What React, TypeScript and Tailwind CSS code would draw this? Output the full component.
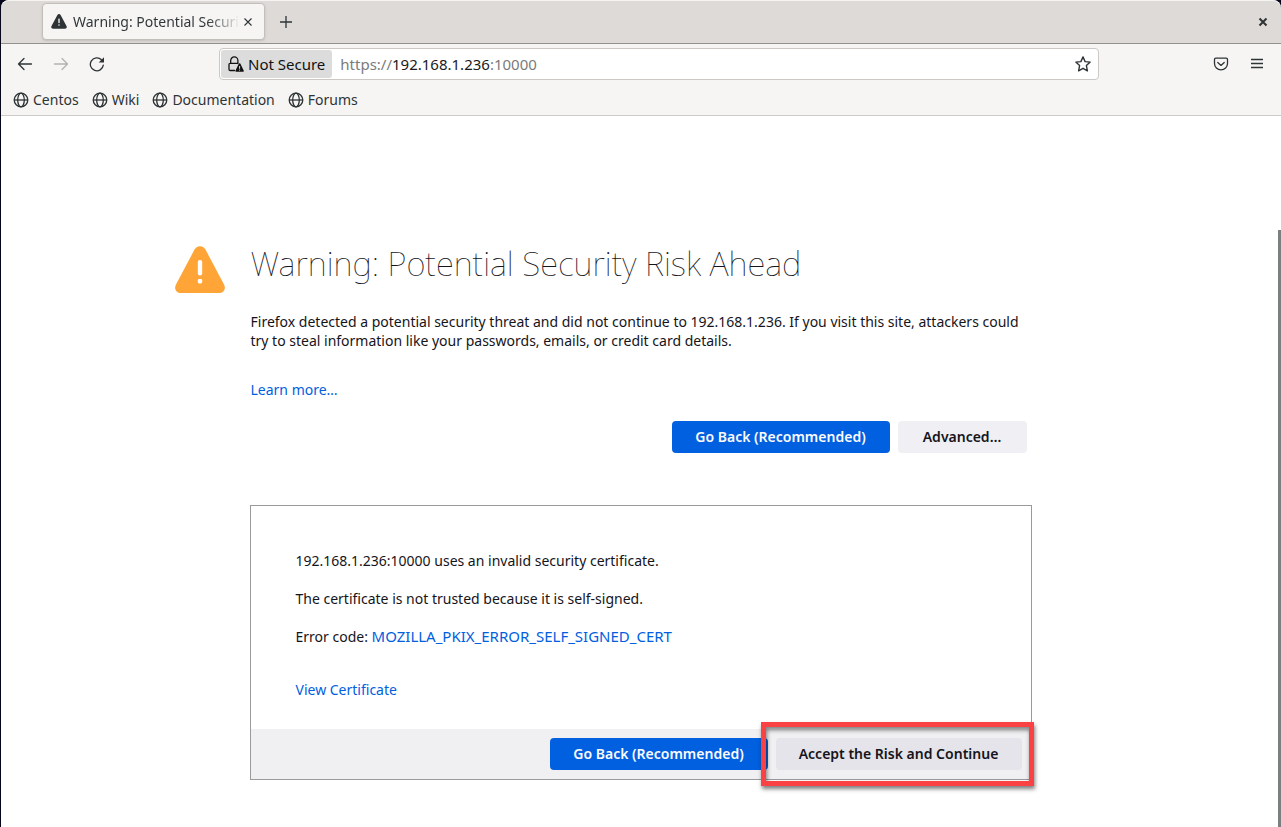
import React from "react";

function WarningGlyph({ className, mark }: { className: string; mark: string }) {
  return (
    <svg viewBox="0 0 50 48" className={className} aria-hidden="true">
      <path
        fill="currentColor"
        d="M19.5 3.6C22-.9 28-.9 30.5 3.6L49 38.5C51.400 43 48.500 47 44 47H6C1.500 47-1.400 43 1 38.500Z"
      />
      <rect x="22.800" y="14" width="4.400" height="15.500" rx="2" fill={mark} />
      <rect x="22.800" y="33" width="4.400" height="4.400" rx="1.400" fill={mark} />
    </svg>
  );
}

function Globe() {
  return (
    <svg viewBox="0 0 16 16" className="size-4 shrink-0" fill="none" stroke="currentColor" strokeWidth="1.300" aria-hidden="true">
      <circle cx="8" cy="8" r="6.800" />
      <ellipse cx="8" cy="8" rx="3.300" ry="6.800" />
      <path d="M1 8h14" />
    </svg>
  );
}

function LockWarning() {
  return (
    <svg viewBox="0 0 16 16" className="size-4 shrink-0" fill="none" aria-hidden="true">
      <path
        d="M6.500 14.500H2.200a1.200 1.200 0 0 1-1.200-1.200V8.500a1.200 1.200 0 0 1 1.200-1.200h7.300M2.700 7.200V4.500a3.600 3.600 0 0 1 7.200 0v3"
        stroke="currentColor"
        strokeWidth="1.300"
        strokeLinecap="round"
      />
      <path d="M10.900 7.600a.8.800 0 0 1 1.400 0l3.500 7.100c.3.600-.1 1.100-.7 1.100H8.100c-.6 0-1-.5-.7-1.100Z" fill="currentColor" />
      <path d="M11.600 10v2.800M11.600 13.600v1" stroke="#dcdcdc" strokeWidth="1" />
    </svg>
  );
}

function TabStrip() {
  return (
    <header className="flex h-11 items-center rounded-t-lg border-b border-[#919190] bg-[#dedad7] pr-[13px] pl-[41px] shadow-[inset_0_1px_0_#f5f4f3]">
      <div className="flex h-[37px] w-[223px] items-center rounded border border-[#c2beba] bg-[#f6f5f4] pr-3 pl-2 shadow-sm">
        <WarningGlyph className="mr-1.5 h-[15px] w-4 shrink-0 text-[#2e3436]" mark="#f6f5f4" />
        <span className="flex-1 overflow-hidden bg-linear-to-r from-[#2e3436] from-80% to-[#f6f5f4] bg-clip-text text-[14px] leading-5 whitespace-nowrap text-transparent">
          Warning: Potential Security Risk Ahead
        </span>
        <button aria-label="Close tab" className="ml-1 shrink-0 text-[#2e3436]">
          <svg viewBox="0 0 8 8" className="size-2" stroke="currentColor" strokeWidth="1.100">
            <path d="M.5.5l7 7M7.500.5l-7 7" />
          </svg>
        </button>
      </div>
      <button aria-label="New tab" className="ml-[15px] text-[#2e3436]">
        <svg viewBox="0 0 12 12" className="size-3" stroke="currentColor" strokeWidth="1.300">
          <path d="M6 0v12M0 6h12" />
        </svg>
      </button>
      <button aria-label="Close window" className="ml-auto text-[#2e3436]">
        <svg viewBox="0 0 10 10" className="size-[10px]" stroke="currentColor" strokeWidth="2">
          <path d="M1.500 1.500l7 7M8.500 1.500l-7 7" />
        </svg>
      </button>
    </header>
  );
}

function Toolbar() {
  return (
    <div className="flex h-10 items-center bg-[#f6f5f4] pr-4 pl-4 text-[#2e3436]">
      <div className="flex w-[202px] shrink-0 items-center gap-5">
        <button aria-label="Back">
          <svg viewBox="0 0 16 16" className="size-4" fill="none" stroke="currentColor" strokeWidth="1.300" strokeLinecap="round" strokeLinejoin="round">
            <path d="M14.500 8H1.500M7 2.500L1.500 8 7 13.500" />
          </svg>
        </button>
        <button aria-label="Forward" disabled className="text-[#b1b2b1]">
          <svg viewBox="0 0 16 16" className="size-4" fill="none" stroke="currentColor" strokeWidth="1.300" strokeLinecap="round" strokeLinejoin="round">
            <path d="M1.500 8h13M9 2.500L14.500 8 9 13.500" />
          </svg>
        </button>
        <button aria-label="Reload">
          <svg viewBox="0 0 16 16" className="size-4" fill="none" stroke="currentColor" strokeWidth="1.300" strokeLinecap="round">
            <path d="M14.300 9.200A6.500 6.500 0 1 1 12.500 3.800L14 5" />
            <path d="M15 1.200V6.500H9.700Z" fill="currentColor" stroke="none" />
          </svg>
        </button>
      </div>
      <div className="flex h-8 w-[880px] min-w-0 items-center rounded border border-[#cbc8c5] bg-white pr-[7px] pl-px">
        <button className="flex h-7 shrink-0 items-center gap-1 rounded-[3px] bg-[#dcdcdc] px-[7px] text-[15px] leading-5 whitespace-nowrap text-[#111]">
          <LockWarning />
          Not Secure
        </button>
        <span className="flex-1 truncate pl-2 text-[15px] leading-5 text-[#7b7b7b]">
          https://<span className="text-[#1a1a1a]">192.168.1.236</span>:10000
        </span>
        <button aria-label="Bookmark this page">
          <svg viewBox="0 0 16 16" className="size-4" fill="none" stroke="currentColor" strokeWidth="1.400" strokeLinejoin="round">
            <path d="M8 .9l2.100 4.700 5.100.5-3.800 3.500 1 5.200L8 12.300l-4.400 2.500 1-5.200L.8 6.100l5.100-.5Z" />
          </svg>
        </button>
      </div>
      <div className="ml-auto flex items-center gap-5">
        <button aria-label="Save to Pocket">
          <svg viewBox="0 0 16 16" className="size-4" fill="none" stroke="currentColor" strokeWidth="1.300" strokeLinecap="round" strokeLinejoin="round">
            <path d="M2.800 2.200h10.400A1.300 1.300 0 0 1 14.500 3.500V7.500a6.500 6.300 0 0 1-13 0V3.500A1.300 1.300 0 0 1 2.800 2.200ZM4.800 6.500L8 9.400l3.200-2.900" />
          </svg>
        </button>
        <button aria-label="Open application menu">
          <svg viewBox="0 0 16 16" className="size-4" stroke="currentColor" strokeWidth="1.300">
            <path d="M2 3.500h12M2 7.500h12M2 11.500h12" />
          </svg>
        </button>
      </div>
    </div>
  );
}

const bookmarks = ["Centos", "Wiki", "Documentation", "Forums"];

function Bookmarks() {
  return (
    <nav aria-label="Bookmarks" className="flex h-8 items-center gap-[13px] border-b border-[#cdcac7] bg-[#f6f5f4] pl-3 text-[#2e3436]">
      {bookmarks.map((name) => (
        <a key={name} href="#" className="flex items-center gap-1 text-[14px] leading-5">
          <Globe />
          {name}
        </a>
      ))}
    </nav>
  );
}

function GoBack() {
  return (
    <button className="h-8 w-[218px] rounded bg-[#0060df] leading-5 font-semibold whitespace-nowrap text-[#fbfbfe]">
      Go Back (Recommended)
    </button>
  );
}

function ErrorPage() {
  return (
    <div className="mx-auto flex w-full max-w-[932px] pt-[124px] pr-[74px] pb-10 text-[14px] leading-[19px] text-[#15141a]">
      <div className="w-[76px] shrink-0 pt-[6px] pl-px">
        <WarningGlyph className="h-12 w-[50px] text-[#ffa436]" mark="#fff" />
      </div>
      <div className="min-w-0 flex-1">
        <div className="pr-[5px] pl-px">
          <h1 className="text-[33px] leading-12 font-thin">Warning: Potential Security Risk Ahead</h1>
          <p className="mt-6">
            Firefox detected a potential security threat and did not continue to 192.168.1.236. If you visit this site,
            attackers could try to steal information like your passwords, emails, or credit card details.
          </p>
          <a href="#" className="mt-[30px] block w-fit text-[#0060df]">
            Learn more…
          </a>
          <div className="mt-[22px] flex justify-end gap-2">
            <GoBack />
            <button className="h-8 w-[129px] rounded bg-[#f0f0f4] leading-5 font-semibold">Advanced…</button>
          </div>
        </div>
        <section className="mt-[52px] border border-[#9a9a9c]">
          <div className="px-[45px] pt-[45px] pb-[30px]">
            <p>192.168.1.236:10000 uses an invalid security certificate.</p>
            <p className="mt-[19px]">The certificate is not trusted because it is self-signed.</p>
            <p className="mt-[19px]">
              Error code:{" "}
              <a href="#" className="text-[15px] text-[#0060df]">
                MOZILLA_PKIX_ERROR_SELF_SIGNED_CERT
              </a>
            </p>
            <a href="#" className="mt-[34px] block w-fit text-[#0060df]">
              View Certificate
            </a>
          </div>
          <div className="flex justify-end gap-2 bg-[#f0f0f2] py-[9px] pr-[9px]">
            <GoBack />
            <div className="relative">
              <button className="h-8 w-[246px] rounded bg-[#e4e4ea] leading-5 font-semibold">
                Accept the Risk and Continue
              </button>
              <div className="pointer-events-none absolute -top-4 -right-3 -bottom-4 -left-[15px] border-[5px] border-[#fa4144] shadow-[1px_3px_4px_rgba(0,0,0,0.5),inset_1px_3px_4px_rgba(0,0,0,0.5)]" />
            </div>
          </div>
        </section>
      </div>
    </div>
  );
}

export default function App() {
  return (
    <div className="flex min-h-screen flex-col bg-[#05051c] pl-px font-['Noto_Sans',sans-serif]">
      <TabStrip />
      <Toolbar />
      <Bookmarks />
      <main className="flex flex-1 bg-white">
        <ErrorPage />
        <div className="mt-[114px] w-[3px] shrink-0 bg-[#7c7f80]" />
      </main>
    </div>
  );
}
